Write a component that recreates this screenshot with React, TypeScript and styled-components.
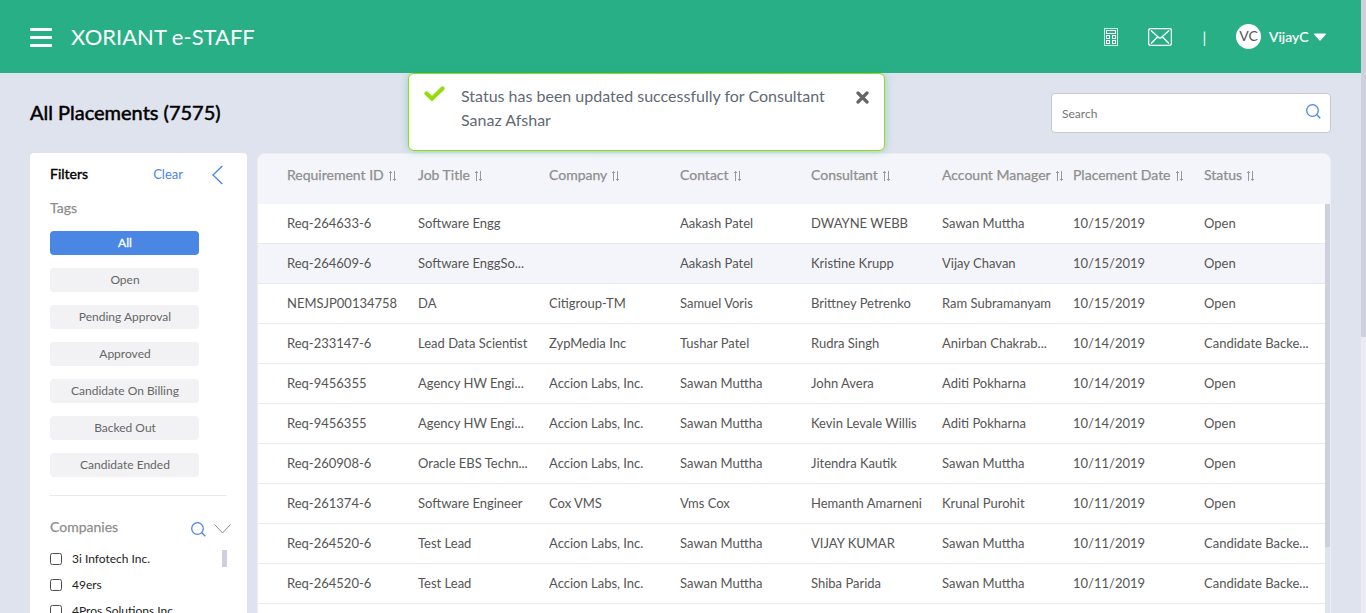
import React from "react";
import styled, { createGlobalStyle } from "styled-components";

const GlobalStyle = createGlobalStyle`
  * { box-sizing: border-box; }
  html, body { margin: 0; padding: 0; height: 100%; overflow: hidden; }
  body { font-family: Lato, "Liberation Sans", sans-serif; background: #dfe3ee; color: #555; }
  button { font-family: inherit; border: 0; padding: 0; background: none; }
`;

const Shell = styled.div`
  display: flex;
  width: 1366px;
  height: 613px;
  overflow: hidden;
`;

const Page = styled.div`
  position: relative;
  width: 1361px;
  height: 613px;
  display: flex;
  flex-direction: column;
  background: #dfe3ee;
`;

const ScrollTrack = styled.div<{ $track: string }>`
  width: 5px;
  flex: none;
  background: ${(p) => p.$track};
`;

const ScrollThumb = styled.div<{ $height: number }>`
  height: ${(p) => p.$height}px;
  background: #cfd0de;
`;

const Header = styled.header`
  display: flex;
  align-items: center;
  flex: none;
  height: 73px;
  padding: 0 35px 0 30px;
  background: #29af86;
  color: #fff;
`;

const MenuButton = styled.button`
  display: flex;
  flex-direction: column;
  gap: 5px;
  width: 22px;
  margin-top: 2px;
`;

const MenuBar = styled.span`
  height: 3px;
  border-radius: 1px;
  background: #fff;
`;

const Brand = styled.div`
  margin-left: 19px;
  font-size: 22px;
  line-height: 26px;
  white-space: nowrap;
`;

const HeaderTools = styled.div`
  display: flex;
  align-items: center;
  height: 26px;
  margin-left: auto;
  margin-top: 1px;
  svg { display: block; }
`;

const MailIcon = styled.svg`
  margin-left: 30px;
`;

const Separator = styled.span`
  width: 15px;
  margin: 0 24px 0 25px;
  font-size: 15px;
  line-height: 20px;
  text-align: center;
`;

const Avatar = styled.span`
  width: 25px;
  height: 25px;
  margin-top: -1px;
  border-radius: 50%;
  background: #fff;
  color: #555;
  font-size: 14px;
  line-height: 24px;
  text-align: center;
`;

const UserName = styled.span`
  width: 40px;
  margin-left: 8px;
  margin-top: -1px;
  font-size: 14px;
  line-height: 20px;
  white-space: nowrap;
  -webkit-text-stroke: 0.2px #fff;
`;

const Caret = styled.svg`
  margin-left: 5px;
`;

const TitleBar = styled.div`
  display: flex;
  justify-content: space-between;
  align-items: center;
  flex: none;
  height: 80px;
  padding: 0 30px;
`;

const Title = styled.h1`
  margin: 0 0 2px;
  color: #000;
  font-size: 20px;
  line-height: 24px;
  font-weight: 400;
  -webkit-text-stroke: 0.5px #000;
`;

const SearchBox = styled.div`
  display: flex;
  align-items: center;
  justify-content: space-between;
  width: 280px;
  height: 40px;
  padding: 0 9px 0 10px;
  border: 1px solid #c9c9c9;
  border-radius: 4px;
  background: #fff;
  color: #757575;
  font-size: 12px;
  svg { margin-bottom: 3px; }
`;

const Content = styled.main`
  display: flex;
  flex: 1;
  min-height: 0;
  gap: 10px;
  padding: 0 30px;
`;

const Sidebar = styled.aside`
  width: 217px;
  flex: none;
  padding: 0 20px;
  border-radius: 4px 4px 0 0;
  background: #fff;
  overflow: hidden;
`;

const FilterHead = styled.div`
  display: flex;
  align-items: center;
  height: 44px;
  padding-right: 4px;
  svg { margin-left: 29px; }
`;

const FilterTitle = styled.span`
  margin-bottom: 3px;
  color: #000;
  font-size: 14px;
  -webkit-text-stroke: 0.4px #000;
`;

const ClearLink = styled.button`
  margin: 0 0 3px auto;
  color: #4a86e3;
  font-size: 13px;
`;

const GroupLabel = styled.span`
  color: #8e8e8e;
  font-size: 14px;
  line-height: 20px;
  -webkit-text-stroke: 0.25px #8e8e8e;
`;

const TagList = styled.div`
  display: grid;
  gap: 13px;
  width: 149px;
  margin-top: 13px;
`;

const Tag = styled.button<{ $active?: boolean }>`
  height: 24px;
  padding-left: 1px;
  border-radius: 4px;
  background: ${(p) => (p.$active ? "#4a86e3" : "#f2f2f4")};
  color: ${(p) => (p.$active ? "#fff" : "#666")};
  font-size: 12px;
  line-height: 24px;
  -webkit-text-stroke: ${(p) => (p.$active ? "0.3px #fff" : "0")};
`;

const Divider = styled.hr`
  height: 1px;
  margin: 18px 0 0;
  border: 0;
  background: #e9e9e9;
`;

const CompanyHead = styled.div`
  display: flex;
  align-items: center;
  height: 20px;
  margin: 21px -4px 0 0;
  svg:first-of-type { margin: 5px 8px 0 auto; }
  svg:last-of-type { margin-top: 3px; }
`;

const CompanyPanel = styled.div`
  display: flex;
  justify-content: space-between;
  margin-top: 9px;
`;

const CompanyList = styled.div`
  flex: none;
`;

const CompanyRow = styled.label`
  display: flex;
  align-items: center;
  gap: 10px;
  height: 26px;
  color: #222;
  font-size: 12px;
  line-height: 24px;
  white-space: nowrap;
`;

const CompanyName = styled.span`
  padding-bottom: 1px;
`;

const CheckSquare = styled.span`
  width: 12px;
  height: 12px;
  border: 1px solid #4a4a4a;
  border-radius: 2.5px;
`;

const CompanyThumb = styled.div`
  width: 5px;
  height: 17px;
  margin-top: 4px;
  background: #cfd0de;
`;

const TableCard = styled.section`
  display: flex;
  flex-direction: column;
  flex: 1;
  min-width: 0;
  border: 1px solid #ebedf2;
  border-bottom: 0;
  border-radius: 8px 8px 0 0;
  background: #fff;
  overflow: hidden;
`;

const TableHead = styled.div`
  display: grid;
  grid-template-columns: repeat(8, 131px);
  flex: none;
  height: 50px;
  padding-left: 29px;
  background: #f4f5fa;
`;

const HeadCell = styled.div`
  display: flex;
  align-items: center;
  gap: 4px;
  height: 41px;
  color: #8e8e8e;
  font-size: 14px;
  white-space: nowrap;
  -webkit-text-stroke: 0.25px #8e8e8e;
  svg { flex: none; margin-top: 2px; }
`;

const TableBody = styled.div`
  display: flex;
  flex: 1;
  min-height: 0;
`;

const Rows = styled.div`
  flex: 1;
  min-width: 0;
  overflow: hidden;
`;

const Row = styled.div<{ $hover?: boolean }>`
  display: grid;
  grid-template-columns: repeat(8, 131px);
  height: 40px;
  padding-left: 29px;
  border-bottom: 1px solid #e8e9ed;
  background: ${(p) => (p.$hover ? "#f4f5fa" : "#fff")};
`;

const Cell = styled.div`
  padding-right: 19px;
  color: #555;
  font-size: 13px;
  line-height: 39px;
  white-space: nowrap;
  overflow: hidden;
`;

const Toast = styled.div`
  position: absolute;
  left: 408px;
  top: 73px;
  display: flex;
  width: 477px;
  height: 78px;
  padding: 0 15px;
  border: 1px solid #95dc0b;
  border-radius: 6px;
  background: #fff;
  box-shadow: 0 0 9px rgba(42, 175, 134, 0.4);
  svg { flex: none; }
`;

const ToastText = styled.div`
  width: 395px;
  margin: 10px 0 0 16px;
  color: #5f6a75;
  font-size: 16px;
  line-height: 24px;
  white-space: nowrap;
`;

const CheckGlyph = styled.svg`
  margin-top: 12px;
`;

const CloseGlyph = styled.svg`
  margin-top: 17px;
`;

const SearchGlyph = ({ size = 15 }: { size?: number }) => (
  <svg width={size} height={size} viewBox="0 0 15 15" fill="none" stroke="#4a86e3" strokeWidth="1.3">
    <circle cx="6.5" cy="6.5" r="5.8" />
    <path d="M10.5 10.5 14.3 14.3" />
  </svg>
);

const SortGlyph = () => (
  <svg width="9" height="12" viewBox="0 0 9 12" fill="none" stroke="#999" strokeWidth="1">
    <path d="M2.5 11V1.500M1 3l1.500-1.500L4 3M6.5 1v9.500M5 9l1.500 1.500L8 9" />
  </svg>
);

const columns = [
  "Requirement ID", "Job Title", "Company", "Contact",
  "Consultant", "Account Manager", "Placement Date", "Status",
];

const rows = [
  ["Req-264633-6", "Software Engg", "", "Aakash Patel", "DWAYNE WEBB", "Sawan Muttha", "10/15/2019", "Open"],
  ["Req-264609-6", "Software EnggSo...", "", "Aakash Patel", "Kristine Krupp", "Vijay Chavan", "10/15/2019", "Open"],
  ["NEMSJP00134758", "DA", "Citigroup-TM", "Samuel Voris", "Brittney Petrenko", "Ram Subramanyam", "10/15/2019", "Open"],
  ["Req-233147-6", "Lead Data Scientist", "ZypMedia Inc", "Tushar Patel", "Rudra Singh", "Anirban Chakrab...", "10/14/2019", "Candidate Backe..."],
  ["Req-9456355", "Agency HW Engi...", "Accion Labs, Inc.", "Sawan Muttha", "John Avera", "Aditi Pokharna", "10/14/2019", "Open"],
  ["Req-9456355", "Agency HW Engi...", "Accion Labs, Inc.", "Sawan Muttha", "Kevin Levale Willis", "Aditi Pokharna", "10/14/2019", "Open"],
  ["Req-260908-6", "Oracle EBS Techn...", "Accion Labs, Inc.", "Sawan Muttha", "Jitendra Kautik", "Sawan Muttha", "10/11/2019", "Open"],
  ["Req-261374-6", "Software Engineer", "Cox VMS", "Vms Cox", "Hemanth Amarneni", "Krunal Purohit", "10/11/2019", "Open"],
  ["Req-264520-6", "Test Lead", "Accion Labs, Inc.", "Sawan Muttha", "VIJAY KUMAR", "Sawan Muttha", "10/11/2019", "Candidate Backe..."],
  ["Req-264520-6", "Test Lead", "Accion Labs, Inc.", "Sawan Muttha", "Shiba Parida", "Sawan Muttha", "10/11/2019", "Candidate Backe..."],
];

const tags = ["All", "Open", "Pending Approval", "Approved", "Candidate On Billing", "Backed Out", "Candidate Ended"];
const companies = ["3i Infotech Inc.", "49ers", "4Pros Solutions Inc"];

export default function App() {
  return (
    <Shell>
      <GlobalStyle />
      <Page>
        <Header>
          <MenuButton aria-label="Menu"><MenuBar /><MenuBar /><MenuBar /></MenuButton>
          <Brand>XORIANT e-STAFF</Brand>
          <HeaderTools>
            <svg width="14" height="18" viewBox="0 0 14 18" fill="none" stroke="#fff" strokeWidth="1">
              <rect x=".5" y=".5" width="13" height="17" opacity=".8" />
              <rect x="2.500" y="2.500" width="9" height="3" />
              <rect x="2.500" y="7.500" width="3" height="3" />
              <rect x="8.500" y="7.500" width="3" height="3" />
              <rect x="2.500" y="12.500" width="3" height="3" />
              <rect x="8.500" y="12.500" width="3" height="3" />
            </svg>
            <MailIcon width="24" height="18" viewBox="0 0 24 18" fill="none" stroke="#fff" strokeWidth="1.3">
              <rect x=".6" y=".6" width="22.800" height="16.800" rx="2" />
              <path d="M3 2.500l8 7.300q1 .8 2 0l8-7.300M3 15.500l6.500-6.500M21 15.500l-6.500-6.500" />
            </MailIcon>
            <Separator>|</Separator>
            <Avatar>VC</Avatar>
            <UserName>VijayC</UserName>
            <Caret width="12" height="8" viewBox="0 0 12 8" fill="#fff">
              <path d="M.5.5h11q.6.3.2.900L7 7q-1 1-2 0L.3 1.400Q-.1.8.5.5z" />
            </Caret>
          </HeaderTools>
        </Header>
        <TitleBar>
          <Title>All Placements (7575)</Title>
          <SearchBox><span>Search</span><SearchGlyph /></SearchBox>
        </TitleBar>
        <Content>
          <Sidebar>
            <FilterHead>
              <FilterTitle>Filters</FilterTitle>
              <ClearLink>Clear</ClearLink>
              <svg width="11" height="20" viewBox="0 0 11 20" fill="none" stroke="#4a86e3" strokeWidth="1.3">
                <path d="M10.300 1 1 10l9.300 9" />
              </svg>
            </FilterHead>
            <GroupLabel>Tags</GroupLabel>
            <TagList>
              {tags.map((t, i) => <Tag key={t} $active={i === 0}>{t}</Tag>)}
            </TagList>
            <Divider />
            <CompanyHead>
              <GroupLabel>Companies</GroupLabel>
              <SearchGlyph />
              <svg width="17" height="10" viewBox="0 0 17 10" fill="none" stroke="#888" strokeWidth="1">
                <path d="M.5.5l8 8.500 8-8.500" />
              </svg>
            </CompanyHead>
            <CompanyPanel>
              <CompanyList>
                {companies.map((c) => <CompanyRow key={c}><CheckSquare /><CompanyName>{c}</CompanyName></CompanyRow>)}
              </CompanyList>
              <CompanyThumb />
            </CompanyPanel>
          </Sidebar>
          <TableCard>
            <TableHead>
              {columns.map((c) => <HeadCell key={c}>{c}<SortGlyph /></HeadCell>)}
            </TableHead>
            <TableBody>
              <Rows>
                {rows.map((r, i) => (
                  <Row key={i} $hover={i === 1}>
                    {r.map((v, j) => <Cell key={j}>{v}</Cell>)}
                  </Row>
                ))}
              </Rows>
              <ScrollTrack $track="#dfe3ee"><ScrollThumb $height={343} /></ScrollTrack>
            </TableBody>
          </TableCard>
        </Content>
        <Toast>
          <CheckGlyph width="21" height="16" viewBox="0 0 21 16" fill="none" stroke="#95dc0b" strokeWidth="4.200" strokeLinecap="round">
            <path d="M2.500 7.500l5.500 5.200L18.500 2.500" strokeLinejoin="miter" />
          </CheckGlyph>
          <ToastText>Status has been updated successfully for Consultant<br />Sanaz Afshar</ToastText>
          <CloseGlyph width="13" height="13" viewBox="0 0 13 13" fill="none" stroke="#666" strokeWidth="3.200" strokeLinecap="round">
            <path d="M2 2l9 9M11 2l-9 9" />
          </CloseGlyph>
        </Toast>
      </Page>
      <ScrollTrack $track="#ebebf3"><ScrollThumb $height={337} /></ScrollTrack>
    </Shell>
  );
}
